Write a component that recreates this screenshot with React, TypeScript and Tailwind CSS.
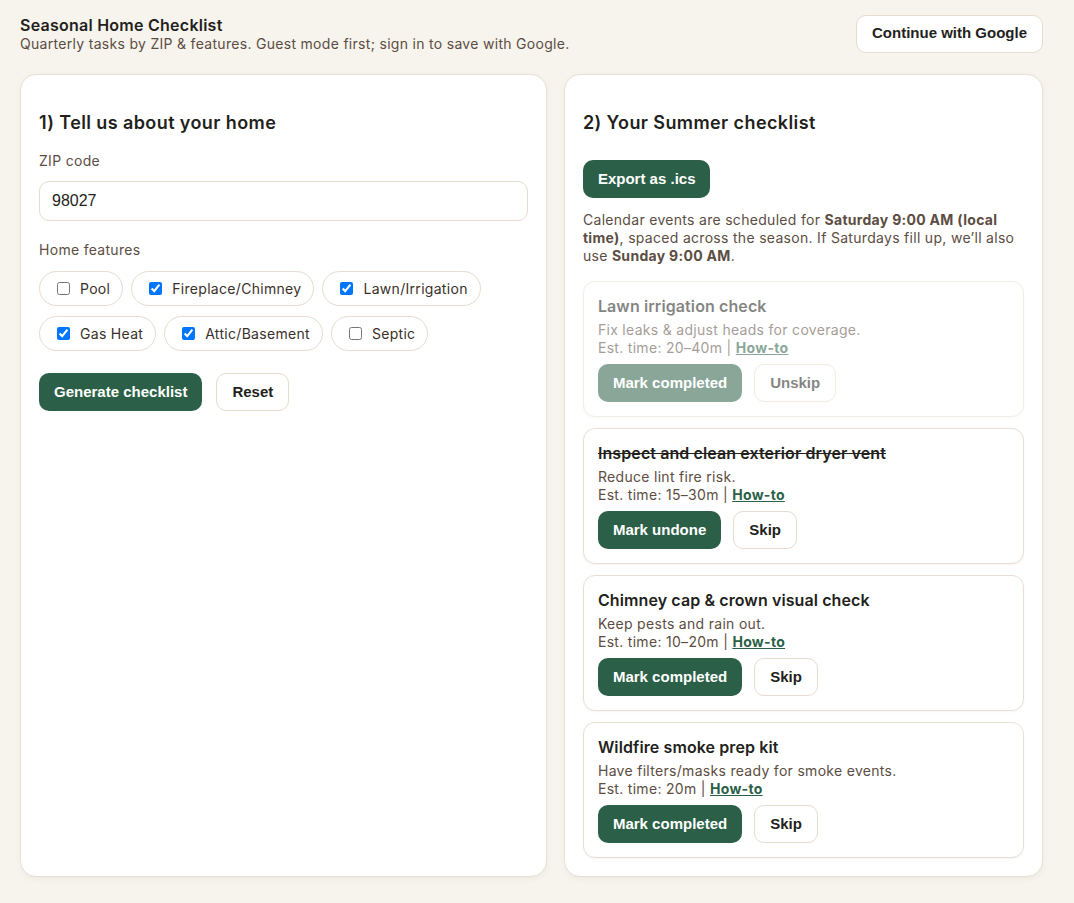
// ============================================================
// Seasonal Home Checklist — guest mode screen
// ============================================================

const BTN_FONT = { fontFamily: '"Liberation Sans", Arial, sans-serif' };

type Feature = { label: string; checked: boolean };

const FEATURES: Feature[] = [
  { label: "Pool", checked: false },
  { label: "Fireplace/Chimney", checked: true },
  { label: "Lawn/Irrigation", checked: true },
  { label: "Gas Heat", checked: true },
  { label: "Attic/Basement", checked: true },
  { label: "Septic", checked: false },
];

type Task = {
  title: string;
  desc: string;
  time: string;
  status: "skipped" | "done" | "open";
};

const TASKS: Task[] = [
  { title: "Lawn irrigation check", desc: "Fix leaks & adjust heads for coverage.", time: "20–40m", status: "skipped" },
  { title: "Inspect and clean exterior dryer vent", desc: "Reduce lint fire risk.", time: "15–30m", status: "done" },
  { title: "Chimney cap & crown visual check", desc: "Keep pests and rain out.", time: "10–20m", status: "open" },
  { title: "Wildfire smoke prep kit", desc: "Have filters/masks ready for smoke events.", time: "20m", status: "open" },
];

function PrimaryButton({ children }: { children: React.ReactNode }) {
  return (
    <button
      style={BTN_FONT}
      className="h-[38px] px-[15px] rounded-[10px] bg-[#2b5f47] text-white text-[15px] font-bold tracking-normal"
    >
      {children}
    </button>
  );
}

function GhostButton({ children }: { children: React.ReactNode }) {
  return (
    <button
      style={BTN_FONT}
      className="h-[38px] px-[15px] rounded-[10px] bg-white border border-[#e6dccf] text-[#231f1c] text-[15px] font-bold tracking-normal"
    >
      {children}
    </button>
  );
}

function TaskCard({ task }: { task: Task }) {
  const skipped = task.status === "skipped";
  const done = task.status === "done";
  return (
    <div
      className={
        "rounded-xl border border-[#e8dfd3] bg-white px-[14px] pt-[13px] pb-[14px] shadow-[0_1px_2px_rgba(90,70,50,0.05)] " +
        (skipped ? "opacity-55" : "")
      }
    >
      <div
        className={
          "text-[16px] leading-[22px] font-semibold tracking-[0.1px] text-[#231f1c] " + (done ? "line-through" : "")
        }
      >
        {task.title}
      </div>
      <div className="mt-[4px] text-[14px] leading-[18px] text-[#5c4d43]">{task.desc}</div>
      <div className="text-[14px] leading-[18px] text-[#5c4d43]">
        Est. time: {task.time} |{" "}
        <a href="#" className="font-bold text-[#2b5f47] underline">
          How-to
        </a>
      </div>
      <div className="mt-[7px] flex gap-3">
        <PrimaryButton>{done ? "Mark undone" : "Mark completed"}</PrimaryButton>
        <GhostButton>{skipped ? "Unskip" : "Skip"}</GhostButton>
      </div>
    </div>
  );
}

export default function App() {
  return (
    <div
      className="min-h-screen bg-[#f7f4ee] text-[#231f1c] tracking-[0.3px] pl-5 pr-[31px] pt-[14px] pb-6"
      style={{ fontFamily: 'Inter, "Noto Sans", sans-serif' }}
    >
      {/* Header */}
      <header className="flex items-center justify-between">
        <div className="pt-px">
          <h1 className="text-[16px] leading-5 font-semibold tracking-[0.25px]">Seasonal Home Checklist</h1>
          <p className="text-[14px] leading-[18px] text-[#5c4d43]">
            Quarterly tasks by ZIP &amp; features. Guest mode first; sign in to save with Google.
          </p>
        </div>
        <GhostButton>Continue with Google</GhostButton>
      </header>

      <div className="mt-[21px] grid grid-cols-[1.1fr_1fr] gap-[17px]">
        {/* Left: home form */}
        <section className="rounded-2xl border border-[#e8dfd3] bg-white px-[18px] pt-[35px] pb-5 shadow-[0_2px_6px_rgba(90,70,50,0.06)]">
          <h2 className="text-[18px] leading-[26px] font-semibold tracking-[0.4px]">1) Tell us about your home</h2>
          <label className="mt-[15px] block text-[14px] leading-5 text-[#5c4d43]">ZIP code</label>
          <input
            defaultValue="98027"
            style={BTN_FONT}
            className="mt-[10px] block w-full h-[40px] rounded-[10px] border border-[#e6dccf] px-3 text-[16px] tracking-normal text-[#231f1c] outline-none"
          />
          <div className="mt-[19px] text-[14px] leading-5 text-[#5c4d43]">Home features</div>
          <div className="mt-[11px] flex flex-wrap gap-x-2 gap-y-2.5">
            {FEATURES.map((f) => (
              <label
                key={f.label}
                className="flex items-center gap-2.5 h-[35px] pl-[17px] pr-3 rounded-full border border-[#e6dccf] text-[14px] text-[#3a302a]"
              >
                <input type="checkbox" defaultChecked={f.checked} className="m-0" />
                {f.label}
              </label>
            ))}
          </div>
          <div className="mt-[22px] flex gap-3.5">
            <PrimaryButton>Generate checklist</PrimaryButton>
            <GhostButton>Reset</GhostButton>
          </div>
        </section>

        {/* Right: checklist */}
        <section className="rounded-2xl border border-[#e8dfd3] bg-white px-[18px] pt-[35px] pb-[18px] shadow-[0_2px_6px_rgba(90,70,50,0.06)]">
          <h2 className="text-[18px] leading-[26px] font-semibold tracking-[0.4px]">2) Your Summer checklist</h2>
          <div className="mt-[24px]">
            <PrimaryButton>Export as .ics</PrimaryButton>
          </div>
          <p className="mt-[13px] text-[14px] leading-[18px] text-[#5c4d43]">
            Calendar events are scheduled for <b>Saturday 9:00 AM (local time)</b>, spaced across the season. If
            Saturdays fill up, we’ll also use <b>Sunday 9:00 AM</b>.
          </p>
          <div className="mt-[16px] flex flex-col gap-[11px]">
            {TASKS.map((t) => (
              <TaskCard key={t.title} task={t} />
            ))}
          </div>
        </section>
      </div>
    </div>
  );
}
